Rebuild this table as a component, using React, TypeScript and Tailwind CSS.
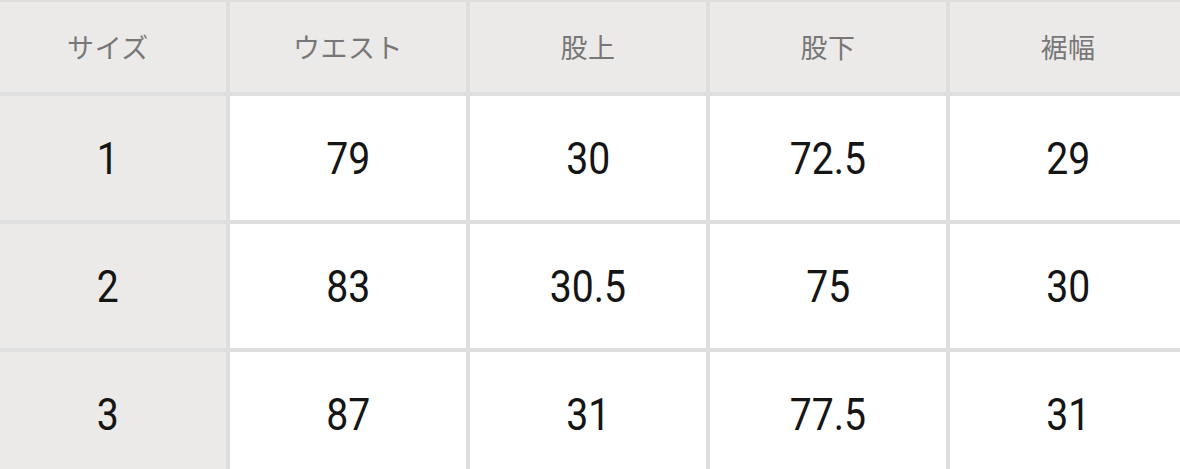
const headers = ['サイズ', 'ウエスト', '股上', '股下', '裾幅'];

const rows = [
  ['1', '79', '30', '72.5', '29'],
  ['2', '83', '30.5', '75', '30'],
  ['3', '87', '31', '77.5', '31'],
];

export default function App() {
  return (
    <div className="w-[1180px] h-[469px] overflow-hidden bg-[#dedede] pt-[2px]">
      {/* table is wider than the shot, cropped left and right */}
      <div className="grid grid-cols-[236px_236px_236px_236px_236px] gap-[4px] -ml-[10px] w-[1196px]">
        {headers.map((h) => (
          <div
            key={h}
            className="h-[90px] bg-[#ebeae8] flex items-center justify-center text-[27px] text-[#777777] tracking-[0.02em]"
            style={{ fontFamily: '"Noto Sans CJK JP", "Noto Sans", sans-serif' }}
          >
            {h}
          </div>
        ))}
        {rows.map((r) =>
          r.map((v, i) => (
            <div
              key={r[0] + '-' + i}
              className={
                'h-[124px] flex items-center justify-center text-[#151515] ' +
                (i === 0 ? 'bg-[#ebeae8]' : 'bg-white')
              }
            >
              <span
                className="inline-block text-[45px] leading-none scale-x-[0.87]"
                style={{ fontFamily: 'Roboto, "Liberation Sans", sans-serif' }}
              >
                {v}
              </span>
            </div>
          ))
        )}
      </div>
    </div>
  );
}
